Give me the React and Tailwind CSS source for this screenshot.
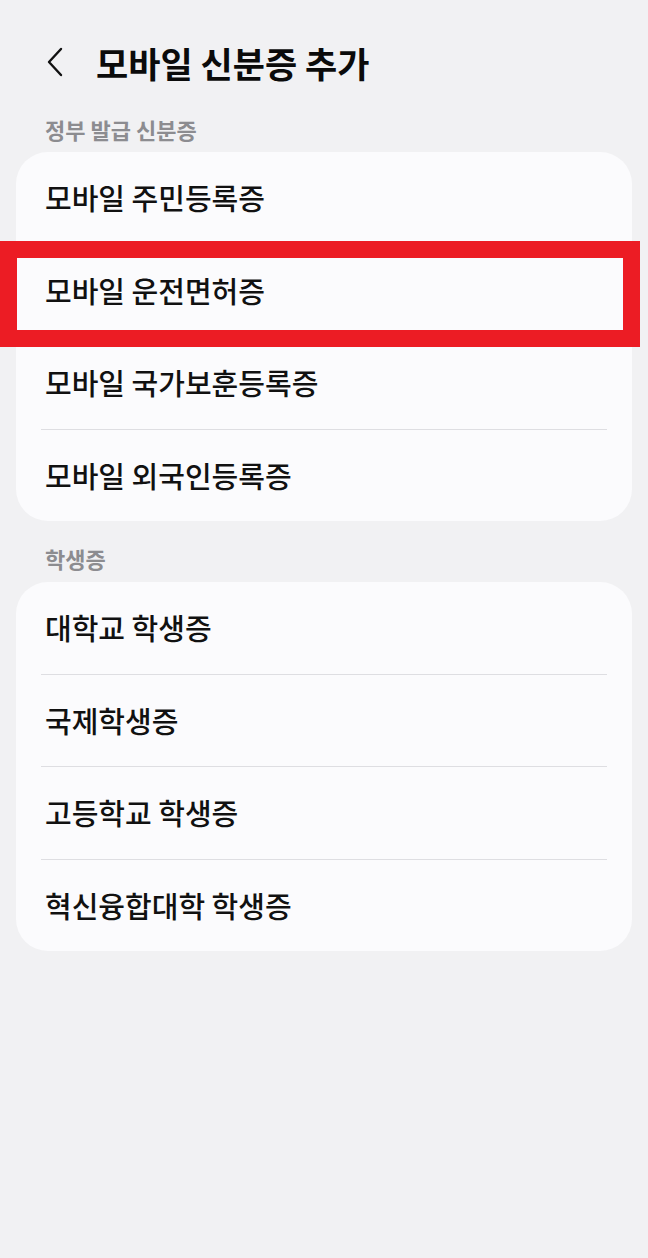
import React from "react";

const font = { fontFamily: '"Noto Sans CJK KR", "Noto Sans", sans-serif' };

function Card({ items }) {
  return (
    <div className="mx-4 rounded-[32px] bg-[#fbfbfd] overflow-hidden">
      {items.map((t, i) => (
        <div key={t}>
          {i > 0 && <div className="mx-[25px] h-px bg-[#dedee2]" />}
          <div className="h-[91.5px] flex items-center pl-[29px] text-[29px] font-medium text-[#111111]">
            {t}
          </div>
        </div>
      ))}
    </div>
  );
}

export default function App() {
  return (
    <div className="relative w-full min-h-[1258px] bg-[#f1f1f3]" style={font}>
      <div className="pt-[28px] h-[96px] flex items-center">
        <div className="w-[96px] flex items-center pl-[44px]">
          <svg width="22" height="32" viewBox="0 0 22 32" fill="none">
            <path d="M17 3 L5 16 L17 29" stroke="#111" strokeWidth="2.4" strokeLinecap="round" strokeLinejoin="round" />
          </svg>
        </div>
        <div className="text-[35px] font-bold text-[#0b0b0b] leading-none">모바일 신분증 추가</div>
      </div>
      <div className="mt-[21px] h-[24px] leading-[24px] pl-[45px] text-[22px] font-semibold text-[#8c8c90]">정부 발급 신분증</div>
      <div className="mt-[11px]">
        <Card items={["모바일 주민등록증", "모바일 운전면허증", "모바일 국가보훈등록증", "모바일 외국인등록증"]} />
      </div>
      <div className="mt-[25px] h-[24px] leading-[24px] pl-[45px] text-[22px] font-semibold text-[#8c8c90]">학생증</div>
      <div className="mt-[12px]">
        <Card items={["대학교 학생증", "국제학생증", "고등학교 학생증", "혁신융합대학 학생증"]} />
      </div>
      <div className="absolute left-0 top-[241px] w-[640px] h-[106px] border-[17px] border-[#ec1c24]" />
    </div>
  );
}
